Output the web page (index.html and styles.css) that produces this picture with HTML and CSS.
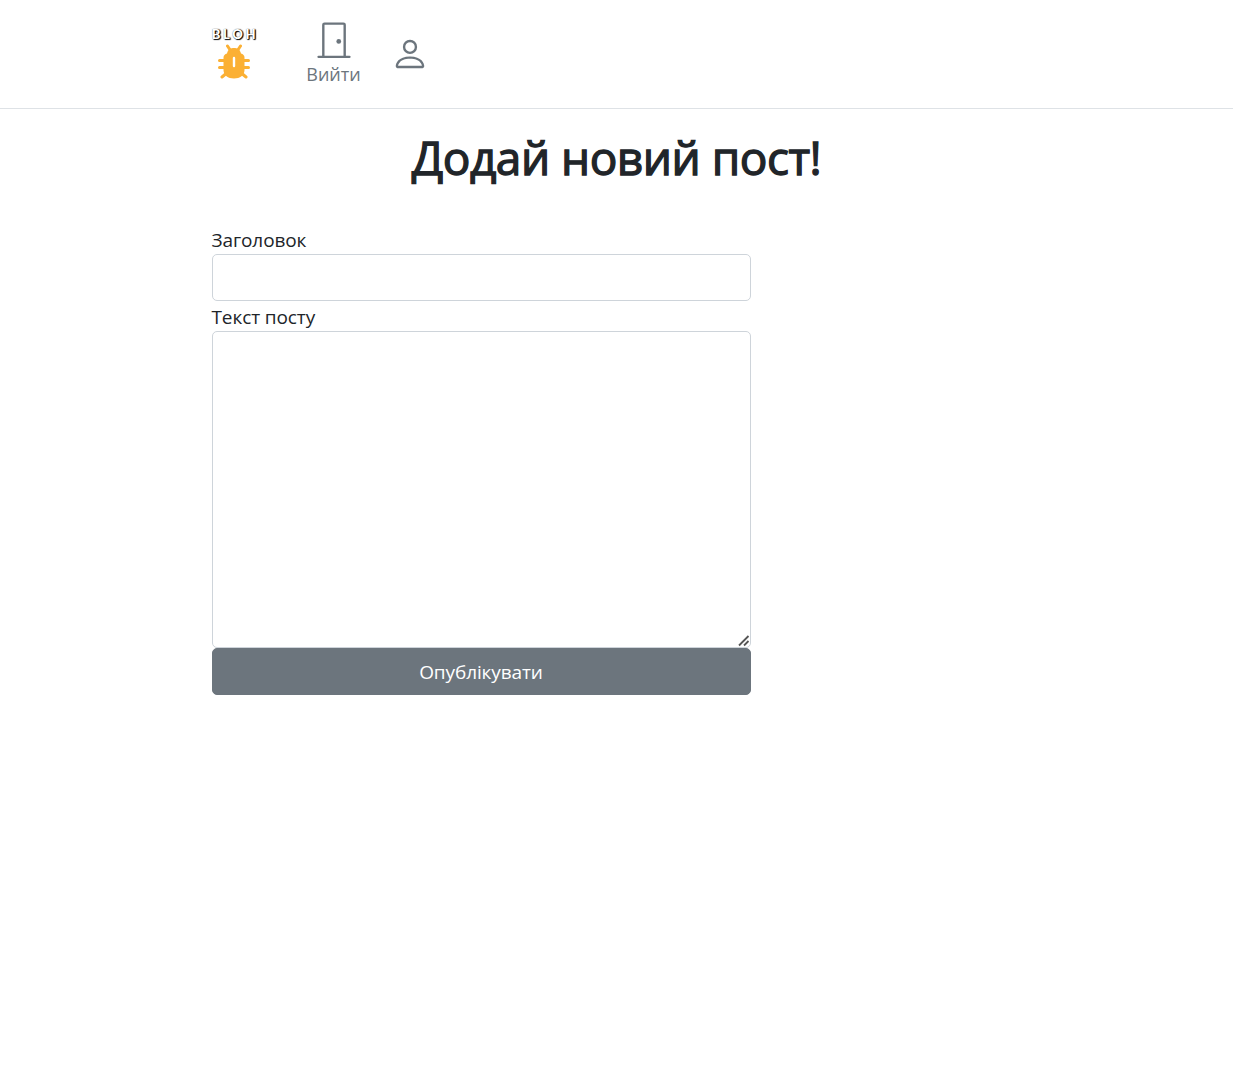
FILE: index.html
```html
<!DOCTYPE html>
<html lang="uk">
<head>
<meta charset="utf-8">
<title>Додай новий пост!</title>
<link rel="stylesheet" href="styles.css">
</head>
<body>
<header class="header">
  <nav class="container nav">
    <a class="logo" href="#">
      <span class="logo-name">BLOH</span>
      <svg class="logo-bug" width="34" height="36" viewBox="0 0 34 36" fill="none" stroke="#fbb034" stroke-width="3" stroke-linecap="round">
        <path d="M10.500 2l3 4.500M23.500 2l-3 4.500M2.500 16.500h8M2.500 23.500h8M23.500 16.500h8M23.500 23.500h8M5 33l6-5M29 33l-6-5"/>
        <path fill="#fbb034" stroke="none" d="M10 9.500C11 5 14 4 17 4s6 1 7 5.500c2 .5 3.500 2 3.500 4V26c0 5-4.500 8.500-10.500 8.500S6.500 31 6.500 26V13.500c0-2 1.500-3.500 3.500-4z"/>
        <path stroke="#fff" stroke-width="2.400" d="M17 14v8"/>
      </svg>
    </a>
    <a class="nav-link" href="#">
      <svg width="38" height="38" viewBox="0 0 16 16" fill="currentColor"><path d="M3 2a1 1 0 0 1 1-1h8a1 1 0 0 1 1 1v13h1.5a.5.5 0 0 1 0 1h-13a.5.5 0 0 1 0-1H3V2zm1 13h8V2H4v13z"/><path d="M9 9a1 1 0 1 0 2 0 1 1 0 0 0-2 0z"/></svg>
      <span class="nav-text">Вийти</span>
    </a>
    <a class="nav-link profile" href="#">
      <svg width="38" height="38" viewBox="0 0 16 16" fill="currentColor"><path d="M8 8a3 3 0 1 0 0-6 3 3 0 0 0 0 6zm2-3a2 2 0 1 1-4 0 2 2 0 0 1 4 0zm4 8c0 1-1 1-1 1H3s-1 0-1-1 1-4 6-4 6 3 6 4zm-1-.004c-.001-.246-.154-.986-.832-1.664C11.516 10.68 10.289 10 8 10c-2.290 0-3.516.68-4.168 1.332-.678.678-.83 1.418-.832 1.664h10z"/></svg>
    </a>
  </nav>
</header>
<main class="container">
  <h1 class="title">Додай новий пост!</h1>
  <form class="form">
    <label class="label" for="title">Заголовок</label>
    <input class="control" id="title" type="text">
    <label class="label" for="text">Текст посту</label>
    <div class="area-wrap">
      <textarea class="control area" id="text"></textarea>
      <svg class="grip" width="12" height="12" viewBox="0 0 12 12" fill="none" stroke="#555" stroke-width="1.800"><path d="M1 10.500L10.500 1M6 10.500L10.500 6"/></svg>
    </div>
    <button class="submit" type="button">Опублікувати</button>
  </form>
</main>
</body>
</html>
```
FILE: styles.css
```css
* { box-sizing: border-box; }
body {
  margin: 0;
  background: #fff;
  color: #212529;
  font: 19px/30px "Segoe UI", "Open Sans", "Noto Sans", sans-serif;
}
.container { width: 810px; margin: 0 auto; }
.header { height: 109px; border-bottom: 1px solid #dee2e6; }
.nav { display: flex; align-items: center; height: 108px; }
.logo {
  display: flex;
  flex-direction: column;
  align-items: center;
  width: 44px;
  margin-right: 51px;
  text-decoration: none;
}
.logo-name {
  height: 16px;
  font: 900 13px/13px Lato, sans-serif;
  letter-spacing: 2.7px;
  margin-right: -3px;
  color: #fff;
  text-shadow: 1px 1px 1px #000, 1px 0 1px #333, 0 0 1px #777;
}
.logo-bug { display: block; margin-bottom: 1px; }
.nav-link {
  display: flex;
  flex-direction: column;
  align-items: center;
  width: 54px;
  color: #6c757d;
  text-decoration: none;
}
.nav-link svg { display: block; flex: none; }
.nav-text { height: 30px; line-height: 32px; font-size: 18px; white-space: nowrap; }
.profile { width: 38px; margin-left: 30px; }
.title {
  margin: 21px 0 0;
  font-size: 46px;
  line-height: 54px;
  font-weight: 500;
  letter-spacing: -0.5px;
  -webkit-text-stroke: 1.3px currentColor;
  text-align: center;
  white-space: nowrap;
}
.form { display: flex; flex-direction: column; width: 539px; margin-top: 40px; }
.label { height: 30px; line-height: 32px; letter-spacing: -0.1px; }
.control {
  display: block;
  width: 100%;
  height: 47px;
  padding: 7px 14px;
  border: 1px solid #ced4da;
  border-radius: 5px;
  background: #fff;
  color: inherit;
  font: inherit;
  outline: 0;
}
.area-wrap { position: relative; }
.area { height: 317px; resize: none; }
.grip { position: absolute; right: 1px; bottom: 1px; pointer-events: none; }
.submit {
  height: 47px;
  padding: 0;
  border: 1px solid #6c757d;
  border-radius: 5px;
  background: #6c757d;
  color: #fff;
  font: inherit;
  letter-spacing: -0.1px;
}
```
